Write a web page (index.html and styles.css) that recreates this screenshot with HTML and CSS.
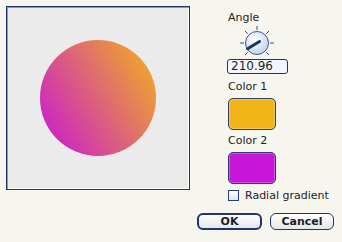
FILE: index.html
```html
<!DOCTYPE html>
<html lang="en">
<head>
    <meta charset="UTF-8">
    <title>Gradient</title>
    <link rel="stylesheet" href="styles.css">
</head>
<body>
    <div class="dialog">
        <div class="main">
            <div class="preview">
                <div class="disc"></div>
            </div>
            <div class="side">
                <div class="label">Angle</div>
                <svg class="knob" viewBox="0 0 34 33" xmlns="http://www.w3.org/2000/svg">
                    <defs>
                        <radialGradient id="knobFill" cx="0.4" cy="0.35" r="0.7">
                            <stop offset="0" stop-color="#ffffff"/>
                            <stop offset="1" stop-color="#c3d0ea"/>
                        </radialGradient>
                    </defs>
                    <g stroke="#2b4a85" stroke-width="1" stroke-linecap="round">
                        <line x1="17" y1="3.5" x2="17" y2="0.5"/>
                        <line x1="3.5" y1="17" x2="0.5" y2="17"/>
                        <line x1="30.5" y1="17" x2="33.5" y2="17"/>
                        <line x1="7.5" y1="7.5" x2="5.3" y2="5.3"/>
                        <line x1="26.5" y1="7.5" x2="28.7" y2="5.3"/>
                        <line x1="7.5" y1="26.5" x2="5.3" y2="28.7"/>
                        <line x1="26.5" y1="26.5" x2="28.7" y2="28.7"/>
                    </g>
                    <circle cx="17" cy="17" r="11.5" fill="url(#knobFill)" stroke="#3a5a94" stroke-width="1"/>
                    <line x1="19.5" y1="15.5" x2="7.5" y2="22.7" stroke="#1c3566" stroke-width="3" stroke-linecap="round"/>
                </svg>
                <div class="field">210.96</div>
                <div class="label label-color">Color 1</div>
                <div class="swatch swatch-one"></div>
                <div class="label label-color">Color 2</div>
                <div class="swatch swatch-two"></div>
                <label class="check">
                    <span class="box"></span>
                    <span>Radial gradient</span>
                </label>
            </div>
        </div>
        <div class="buttons">
            <button class="btn btn-default">OK</button>
            <button class="btn">Cancel</button>
        </div>
    </div>
</body>
</html>
```

FILE: styles.css
```css
* {
    margin: 0;
    padding: 0;
    box-sizing: border-box;
}

body {
    font-family: 'DejaVu Sans', Verdana, sans-serif;
    font-size: 11px;
    line-height: 13px;
    color: #1e1e1e;
    background-color: #f6f5ee;
}

.dialog {
    padding: 6px 8px 0 6px;
}

.main {
    display: flex;
}

.preview {
    width: 184px;
    height: 184px;
    border: 1px solid #1d3670;
    box-shadow: inset 1px 1px 0 #7d9ad0, inset -1px -1px 0 #ffffff;
    background-color: #ebebeb;
    display: flex;
    justify-content: center;
    align-items: center;
    margin-right: 38px;
}

.disc {
    width: 116px;
    height: 116px;
    border-radius: 50%;
    background: linear-gradient(239deg, #f2b519, #c814d6);
}

.side {
    display: flex;
    flex-direction: column;
    align-items: flex-start;
    padding-top: 5px;
}

.knob {
    width: 34px;
    height: 33px;
    margin: 2px 0 0 12px;
}

.field {
    width: 61px;
    height: 15px;
    margin-left: -1px;
    border: 1px solid #1d3670;
    border-radius: 3px;
    background-color: #f2f5fb;
    padding-left: 3px;
    font-size: 12px;
    line-height: 13px;
}

.label-color {
    margin-top: 6px;
}

.swatch {
    width: 48px;
    height: 32px;
    margin-top: 5px;
    border: 1px solid #2a3f70;
    border-radius: 5px;
    box-shadow: inset 0 0 0 1px rgba(255, 255, 255, 0.25);
}

.swatch-one {
    background-color: #f2b519;
}

.swatch-two {
    background-color: #c816d8;
}

.swatch-one + .label-color {
    margin-top: 4px;
}

.swatch-two + .check {
    margin-top: 5px;
}

.check {
    display: flex;
    align-items: center;
    gap: 6px;
}

.box {
    width: 11px;
    height: 11px;
    border: 1px solid #2a3f70;
    background: linear-gradient(#ffffff, #dfe5ef);
}

.buttons {
    display: flex;
    justify-content: flex-end;
    gap: 8px;
    margin-top: 11px;
}

.btn {
    font-family: 'DejaVu Sans', Verdana, sans-serif;
    font-size: 11px;
    font-weight: bold;
    color: #1e1e1e;
    height: 17px;
    border: 1px solid #1d3670;
    border-radius: 6px;
    background: linear-gradient(#ffffff, #e4e6ea);
    width: 64px;
}

.btn-default {
    width: 65px;
    border-width: 2px;
}
```
